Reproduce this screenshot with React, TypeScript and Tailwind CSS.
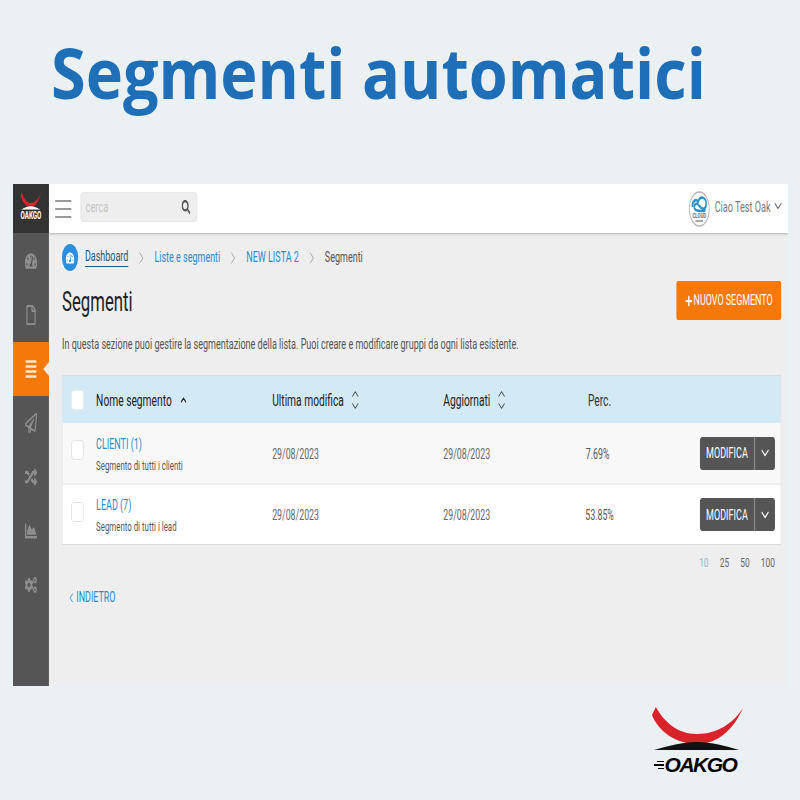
import { FaTachometerAlt, FaRegFile, FaAlignJustify, FaRegPaperPlane, FaRandom, FaChartArea, FaCogs, FaSearch, FaPlus } from "react-icons/fa";
import { ChevronRight, ChevronDown, ChevronUp, ChevronLeft } from "lucide-react";

function Logo({ dark, className }: { dark?: boolean; className?: string }) {
  return (
    <svg viewBox="0 0 96 46" preserveAspectRatio="none" className={className}>
      <path d="M5 2 C14 18 28 29 47 29 C68 29 84 18 94 3 C84 25 68 39 47 39 C26 39 8 27 1 10 Z" fill="#d8232a" />
      <path d="M3 45 C18 41 32 37 47 37 C62 37 76 41 90 45 Z" fill={dark ? "#fff" : "#111"} />
    </svg>
  );
}

function SideIcon({ children, active }: { children: React.ReactNode; active?: boolean }) {
  return (
    <div className={`relative flex h-[54px] items-center justify-center text-[20px] ${active ? "bg-[#f5780a] text-[#fde6cf]" : "text-[#8e8e8e]"}`}>
      {children}
      {active && <span className="absolute right-0 top-[20px] h-0 w-0 border-y-[7px] border-r-[9px] border-y-transparent border-r-[#eeeeee]" />}
    </div>
  );
}

function Sort() {
  return (
    <span className="ml-[9px] inline-flex flex-col text-[#555]">
      <ChevronUp size={18} strokeWidth={1.5} className="-mb-[6px]" />
      <ChevronDown size={18} strokeWidth={1.5} />
    </span>
  );
}

function Check({ white, up }: { white?: boolean; up?: string }) {
  return <div className={`h-[20px] w-[20px] rounded-[4px] border ${up ?? ""} ${white ? "border-[#dcecf5] bg-white" : "border-[#ddd] bg-white"}`} />;
}

function Row({ name, desc, perc, bg, h, up }: { name: string; desc: string; perc: string; bg: string; h: string; up: string }) {
  return (
    <div className={`grid grid-cols-[54px_284px_276px_229px_40px_1fr] items-center ${bg} ${h}`}>
      <div className="pl-[14px]"><Check up={up} /></div>
      <div className="pt-[2px]">
        <div className="text-[14.5px] leading-[20px] text-[#2a8ccb]">{name}</div>
        <div className="mt-[2px] text-[12.7px] leading-[17px] text-[#555]">{desc}</div>
      </div>
      <div className="pt-[3px] text-[14.2px] text-[#666]">29/08/2023</div>
      <div className="pt-[3px] text-[14.2px] text-[#666]">29/08/2023</div>
      <div className="whitespace-nowrap pt-[3px] text-center text-[14.2px] text-[#555]">{perc}</div>
      <div className="flex justify-end pr-[9px]">
        <div className="flex h-[33px] w-[121px] items-center rounded-[4px] bg-[#555] text-white">
          <span className="w-[87px] pt-[2px] text-center text-[14.6px]">MODIFICA</span>
          <span className="flex h-full flex-1 items-center justify-center border-l-2 border-[#888]">
            <ChevronDown size={20} strokeWidth={2} />
          </span>
        </div>
      </div>
    </div>
  );
}

export default function App() {
  return (
    <div className="flex h-[800px] w-[800px] flex-col overflow-hidden bg-[#ebf1f3] font-['Roboto',sans-serif]">
      <div className="h-[184px] pl-[51px] pt-[27px]">
        <h1 className="origin-left scale-x-[0.9] whitespace-nowrap font-['Open_Sans',sans-serif] text-[70px] font-bold leading-[90px] text-[#1f6fb8]">Segmenti automatici</h1>
      </div>

      <div className="ml-[13px] h-[502px] w-[775px] overflow-hidden">
        <div className="flex h-[502px] w-[1250px] origin-top-left scale-x-[0.62]">
          <aside className="w-[58px] shrink-0 bg-[#555]">
            <div className="flex h-[49px] flex-col items-center bg-[#333] pt-[7px]">
              <Logo dark className="h-[19px] w-[34px]" />
              <span className="mt-[1px] text-[10px] font-bold leading-[10px] text-white">OAKGO</span>
            </div>
            <div className="mt-[1px]">
              <SideIcon><FaTachometerAlt /></SideIcon>
              <SideIcon><FaRegFile /></SideIcon>
              <SideIcon active><FaAlignJustify /></SideIcon>
              <SideIcon><FaRegPaperPlane /></SideIcon>
              <SideIcon><FaRandom /></SideIcon>
              <SideIcon><FaChartArea /></SideIcon>
              <SideIcon><FaCogs /></SideIcon>
            </div>
          </aside>

          <main className="flex-1 bg-[#eeeeee]">
            <header className="flex h-[49px] items-center justify-between bg-white pr-[6px] shadow-[0_1px_3px_rgba(0,0,0,0.25)]">
              <div className="flex items-center">
                <div className="ml-[10px] flex w-[26px] flex-col gap-[6px]">
                  <span className="h-[2px] bg-[#999]" />
                  <span className="h-[2px] bg-[#999]" />
                  <span className="h-[2px] bg-[#999]" />
                </div>
                <div className="mb-[3px] ml-[15px] flex h-[30px] w-[188px] items-center justify-between rounded-[4px] border border-[#e4e4e4] bg-[#eeeeee] px-[7px]">
                  <span className="text-[15px] text-[#c4c4c4]">cerca</span>
                  <FaSearch className="mr-[3px] text-[14px] text-[#555]" />
                </div>
              </div>
              <div className="flex items-center">
                <svg viewBox="0 0 34 36" className="h-[36px] w-[34px]">
                  <ellipse cx="17" cy="18" rx="16" ry="17" fill="#fff" stroke="#b5b5b5" strokeWidth="1.5" />
                  <path d="M6 16 C5 10 12 7 15 11 C18 4 28 6 28 13 C28 19 21 19 17 15 C13 11 8 13 9 17 C10 20 22 21 27 19" fill="none" stroke="#2b93c8" strokeWidth="2.6" />
                  <text x="17" y="27" textAnchor="middle" fontSize="7" fontWeight="700" fill="#666">CLOUD</text>
                  <rect x="11" y="29" width="12" height="2" fill="#aaa" />
                </svg>
                <span className="mb-[3px] ml-[8px] text-[14.7px] text-[#777]">Ciao Test Oak</span>
                <ChevronDown size={20} strokeWidth={1.5} className="mb-[5px] ml-[2px] text-[#666]" />
              </div>
            </header>

            <div className="pl-[21px] pr-[11px] pt-[11px]">
              <div className="flex h-[27px] items-center text-[14.5px]">
                <span className="flex h-[27px] w-[26px] items-center justify-center rounded-full bg-[#2a8fe0] text-[14px] text-white"><FaTachometerAlt /></span>
                <span className="ml-[11px] border-b border-[#1b5b80] leading-[18px] text-[#1b5b80]">Dashboard</span>
                <ChevronRight size={20} strokeWidth={1} className="ml-[11px] mr-[11px] text-[#888]" />
                <span className="text-[#2a8ccb]">Liste e segmenti</span>
                <ChevronRight size={20} strokeWidth={1} className="mx-[11px] text-[#888]" />
                <span className="text-[#2a8ccb]">NEW LISTA 2</span>
                <ChevronRight size={20} strokeWidth={1} className="mx-[11px] text-[#888]" />
                <span className="text-[#555]">Segmenti</span>
              </div>

              <div className="mt-[10px] flex h-[39px] items-center justify-between">
                <h2 className="pt-[4px] text-[27px] text-[#222]">Segmenti</h2>
                <button className="flex h-[39px] w-[169px] items-center justify-center rounded-[3px] bg-[#f5780a] pt-[1px] text-[14.4px] text-white">
                  <FaPlus className="mr-[2px] text-[12px]" />NUOVO SEGMENTO
                </button>
              </div>

              <p className="mt-[14px] h-[20px] whitespace-nowrap text-[14.6px] leading-[20px] text-[#555]">In questa sezione puoi gestire la segmentazione della lista. Puoi creare e modificare gruppi da ogni lista esistente.</p>

              <div className="mt-[21px] border border-[#dcdcdc]">
                <div className="grid h-[47px] grid-cols-[54px_284px_276px_232px_40px_1fr] items-center bg-[#d4e9f6] text-[16.5px] text-[#222]">
                  <div className="pl-[14px]"><Check white /></div>
                  <div className="flex items-center"><span className="pt-[3px]">Nome segmento</span><ChevronUp size={14} strokeWidth={3} className="ml-3" /></div>
                  <div className="flex items-center"><span className="pt-[3px]">Ultima modifica</span><Sort /></div>
                  <div className="flex items-center"><span className="pt-[3px]">Aggiornati</span><Sort /></div>
                  <div className="pt-[3px] text-center text-[#333]">Perc.</div>
                  <div />
                </div>
                <Row name="CLIENTI (1)" desc="Segmento di tutti i clienti" perc="7.69%" bg="bg-[#f8f8f8] border-b-2 border-[#eeeeee]" h="h-[62px]" up="mb-[6px]" />
                <Row name="LEAD (7)" desc="Segmento di tutti i lead" perc="53.85%" bg="bg-white" h="h-[59px]" up="mb-[5px]" />
              </div>

              <div className="mt-[7px] flex h-[20px] items-center justify-end gap-[18px] pr-[10px] text-[13.5px] text-[#666]">
                <span className="text-[#8fb4cc]">10</span>
                <span>25</span>
                <span>50</span>
                <span>100</span>
              </div>

              <div className="ml-[7px] mt-[16px] flex h-[20px] items-center text-[14.4px] text-[#2a8ccb]">
                <ChevronLeft size={16} strokeWidth={1.5} />INDIETRO
              </div>
            </div>
          </main>
        </div>
      </div>

      <div className="flex justify-end pr-[55px] pt-[19px]">
        <div className="flex w-[94px] flex-col items-center">
          <Logo className="h-[46px] w-[94px]" />
          <div className="mt-[4px] flex items-center pr-[6px]">
            <span className="mr-[1px] flex flex-col items-end gap-[2px]"><span className="h-[1.5px] w-[7px] bg-black" /><span className="h-[1.5px] w-[10px] bg-black" /><span className="h-[1.5px] w-[6px] bg-black" /></span>
            <span className="font-['Liberation_Sans',sans-serif] text-[21px] font-bold italic leading-[20px] tracking-[-1.5px] text-black">OAKGO</span>
          </div>
        </div>
      </div>
    </div>
  );
}
